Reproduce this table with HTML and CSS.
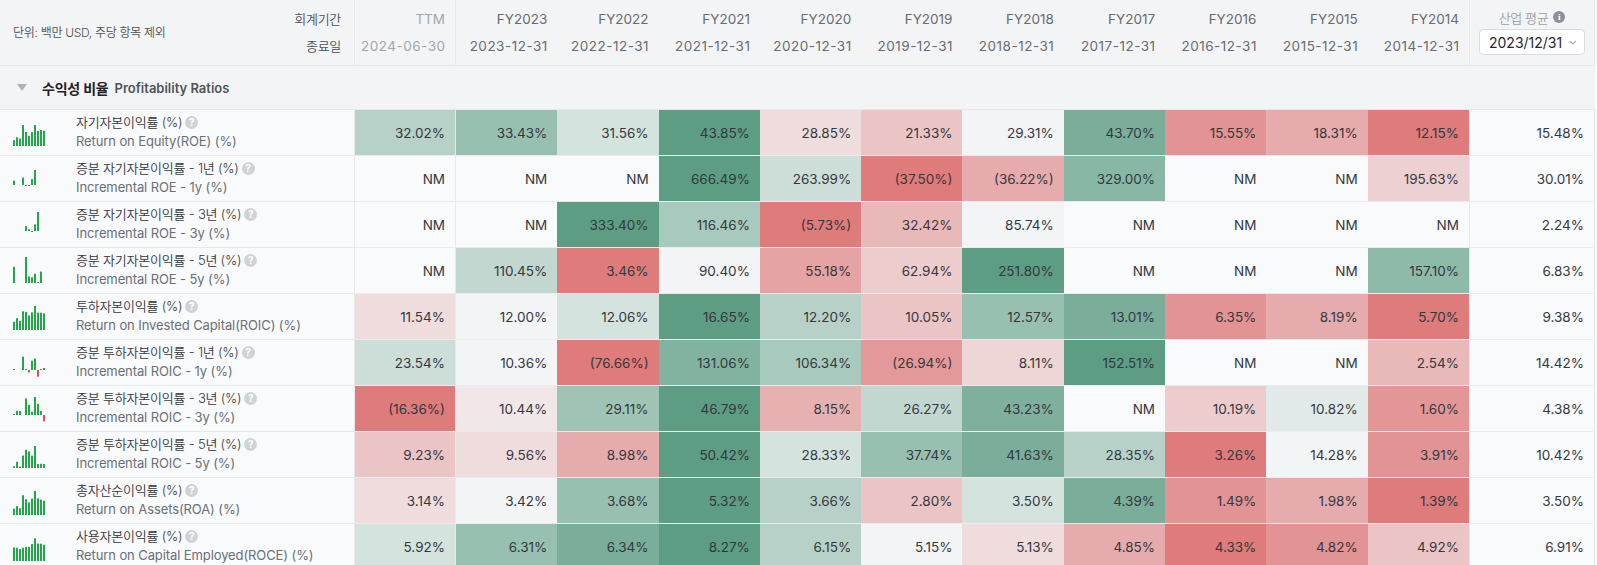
FILE: index.html
```html
<!DOCTYPE html>
<html lang="ko">
<head>
<meta charset="utf-8">
<title>수익성 비율</title>
<link rel="stylesheet" href="styles.css">
</head>
<body>
<div class="sheet">
  <!-- header -->
  <div class="hc hlabel">
    <span class="unit">단위: 백만 USD, 주당 항목 제외</span>
    <span class="hnames"><span>회계기간</span><span>종료일</span></span>
  </div>
  <div class="hc hcol ttm sep"><span>TTM</span><span>2024-06-30</span></div>
  <div class="hc hcol"><span>FY2023</span><span>2023-12-31</span></div>
  <div class="hc hcol"><span>FY2022</span><span>2022-12-31</span></div>
  <div class="hc hcol"><span>FY2021</span><span>2021-12-31</span></div>
  <div class="hc hcol"><span>FY2020</span><span>2020-12-31</span></div>
  <div class="hc hcol"><span>FY2019</span><span>2019-12-31</span></div>
  <div class="hc hcol"><span>FY2018</span><span>2018-12-31</span></div>
  <div class="hc hcol"><span>FY2017</span><span>2017-12-31</span></div>
  <div class="hc hcol"><span>FY2016</span><span>2016-12-31</span></div>
  <div class="hc hcol"><span>FY2015</span><span>2015-12-31</span></div>
  <div class="hc hcol"><span>FY2014</span><span>2014-12-31</span></div>
  <div class="hc havg">
    <span class="avg-title">산업 평균 <i class="info">i</i></span>
    <span class="select">2023/12/31 <svg class="chev" viewBox="0 0 8 5" width="8" height="5"><polyline points="1,1 4,4 7,1"/></svg></span>
  </div>

  <!-- section -->
  <div class="section">
    <svg class="tri" viewBox="0 0 10 7" width="10" height="7"><polygon points="0,0 10,0 5,7"/></svg>
    <span class="sec-ko">수익성 비율</span>
    <span class="sec-en">Profitability Ratios</span>
  </div>

  <!-- row 1 -->
  <div class="lc">
    <svg class="spark" viewBox="0 0 33 30"><rect x="0" y="22.2" width="2" height="5.8"/><rect x="3" y="19.2" width="2" height="8.8"/><rect x="6" y="20.6" width="2" height="7.4"/><rect x="9" y="7.1" width="2" height="20.9"/><rect x="12" y="14" width="2" height="14"/><rect x="15" y="17.8" width="2" height="10.2"/><rect x="18" y="14.2" width="2" height="13.8"/><rect x="21" y="7" width="2" height="21"/><rect x="24" y="12.9" width="2" height="15.1"/><rect x="27" y="12" width="2" height="16"/><rect x="30" y="12.7" width="2" height="15.3"/></svg>
    <div class="names"><div class="ko">자기자본이익률 (%)<i class="q">?</i></div><div class="en">Return on Equity(ROE) (%)</div></div>
  </div>
  <div class="c sep hg" style="--t:.6">32.02%</div>
  <div class="c hg" style="--t:.4">33.43%</div>
  <div class="c hg" style="--t:.8">31.56%</div>
  <div class="c hg" style="--t:0">43.85%</div>
  <div class="c hr" style="--t:.8">28.85%</div>
  <div class="c hr" style="--t:.6">21.33%</div>
  <div class="c hg" style="--t:1">29.31%</div>
  <div class="c hg" style="--t:.2">43.70%</div>
  <div class="c hr" style="--t:.2">15.55%</div>
  <div class="c hr" style="--t:.4">18.31%</div>
  <div class="c hr" style="--t:0">12.15%</div>
  <div class="c avg">15.48%</div>

  <!-- row 2 -->
  <div class="lc">
    <svg class="spark" viewBox="0 0 33 30"><rect x="0" y="16.6" width="2" height="4.4"/><rect x="9" y="13.6" width="2" height="7.4"/><rect class="neg" x="12" y="21" width="2" height="1"/><rect class="neg" x="15" y="21" width="2" height="1"/><rect x="18" y="15.1" width="2" height="5.9"/><rect x="21" y="6" width="2" height="15"/></svg>
    <div class="names"><div class="ko">증분 자기자본이익률 - 1년 (%)<i class="q">?</i></div><div class="en">Incremental ROE - 1y (%)</div></div>
  </div>
  <div class="c sep">NM</div>
  <div class="c">NM</div>
  <div class="c">NM</div>
  <div class="c hg" style="--t:0">666.49%</div>
  <div class="c hg" style="--t:.75">263.99%</div>
  <div class="c hr" style="--t:0">(37.50%)</div>
  <div class="c hr" style="--t:.4">(36.22%)</div>
  <div class="c hg" style="--t:.3">329.00%</div>
  <div class="c">NM</div>
  <div class="c">NM</div>
  <div class="c hr" style="--t:.7">195.63%</div>
  <div class="c avg">30.01%</div>

  <!-- row 3 -->
  <div class="lc">
    <svg class="spark" viewBox="0 0 33 30"><rect x="12" y="16.1" width="2" height="4.9"/><rect x="15" y="19.2" width="2" height="1.8"/><rect class="neg" x="18" y="21" width="2" height="1"/><rect x="21" y="14.4" width="2" height="6.6"/><rect x="24" y="2" width="2" height="19"/></svg>
    <div class="names"><div class="ko">증분 자기자본이익률 - 3년 (%)<i class="q">?</i></div><div class="en">Incremental ROE - 3y (%)</div></div>
  </div>
  <div class="c sep">NM</div>
  <div class="c">NM</div>
  <div class="c hg" style="--t:0">333.40%</div>
  <div class="c hg" style="--t:.5">116.46%</div>
  <div class="c hr" style="--t:0">(5.73%)</div>
  <div class="c hr" style="--t:.5">32.42%</div>
  <div class="c hg" style="--t:1">85.74%</div>
  <div class="c">NM</div>
  <div class="c">NM</div>
  <div class="c">NM</div>
  <div class="c">NM</div>
  <div class="c avg">2.24%</div>

  <!-- row 4 -->
  <div class="lc">
    <svg class="spark" viewBox="0 0 33 30"><rect x="0" y="10.8" width="2" height="16.2"/><rect x="12" y="1" width="2" height="26"/><rect x="15" y="20.5" width="2" height="6.5"/><rect x="18" y="21.3" width="2" height="5.7"/><rect x="21" y="17.7" width="2" height="9.3"/><rect x="24" y="26" width="2" height="1"/><rect x="27" y="15.6" width="2" height="11.4"/></svg>
    <div class="names"><div class="ko">증분 자기자본이익률 - 5년 (%)<i class="q">?</i></div><div class="en">Incremental ROE - 5y (%)</div></div>
  </div>
  <div class="c sep">NM</div>
  <div class="c hg" style="--t:.667">110.45%</div>
  <div class="c hr" style="--t:0">3.46%</div>
  <div class="c hg" style="--t:1">90.40%</div>
  <div class="c hr" style="--t:.333">55.18%</div>
  <div class="c hr" style="--t:.667">62.94%</div>
  <div class="c hg" style="--t:0">251.80%</div>
  <div class="c">NM</div>
  <div class="c">NM</div>
  <div class="c">NM</div>
  <div class="c hg" style="--t:.333">157.10%</div>
  <div class="c avg">6.83%</div>

  <!-- row 5 -->
  <div class="lc">
    <svg class="spark" viewBox="0 0 33 30"><rect x="0" y="19.8" width="2" height="8.2"/><rect x="3" y="16.2" width="2" height="11.8"/><rect x="6" y="18.8" width="2" height="9.2"/><rect x="9" y="9.3" width="2" height="18.7"/><rect x="12" y="9.9" width="2" height="18.1"/><rect x="15" y="13.5" width="2" height="14.5"/><rect x="18" y="10.4" width="2" height="17.6"/><rect x="21" y="4" width="2" height="24"/><rect x="24" y="10.6" width="2" height="17.4"/><rect x="27" y="10.7" width="2" height="17.3"/><rect x="30" y="11.4" width="2" height="16.6"/></svg>
    <div class="names"><div class="ko">투하자본이익률 (%)<i class="q">?</i></div><div class="en">Return on Invested Capital(ROIC) (%)</div></div>
  </div>
  <div class="c sep hr" style="--t:.8">11.54%</div>
  <div class="c hg" style="--t:1">12.00%</div>
  <div class="c hg" style="--t:.8">12.06%</div>
  <div class="c hg" style="--t:0">16.65%</div>
  <div class="c hg" style="--t:.6">12.20%</div>
  <div class="c hr" style="--t:.6">10.05%</div>
  <div class="c hg" style="--t:.4">12.57%</div>
  <div class="c hg" style="--t:.2">13.01%</div>
  <div class="c hr" style="--t:.2">6.35%</div>
  <div class="c hr" style="--t:.4">8.19%</div>
  <div class="c hr" style="--t:0">5.70%</div>
  <div class="c avg">9.38%</div>

  <!-- row 6 -->
  <div class="lc">
    <svg class="spark" viewBox="0 0 33 30"><rect x="0" y="21" width="2" height="1"/><rect x="9" y="8.7" width="2" height="13.3"/><rect x="12" y="21" width="2" height="1"/><rect class="neg" x="15" y="22" width="2" height="2.4"/><rect x="18" y="12.7" width="2" height="9.3"/><rect x="21" y="10.6" width="2" height="11.4"/><rect class="neg" x="24" y="22" width="2" height="6.7"/><rect x="27" y="21" width="2" height="1"/><rect x="30" y="20" width="2" height="2"/></svg>
    <div class="names"><div class="ko">증분 투하자본이익률 - 1년 (%)<i class="q">?</i></div><div class="en">Incremental ROIC - 1y (%)</div></div>
  </div>
  <div class="c sep hg" style="--t:.75">23.54%</div>
  <div class="c hg" style="--t:1">10.36%</div>
  <div class="c hr" style="--t:0">(76.66%)</div>
  <div class="c hg" style="--t:.25">131.06%</div>
  <div class="c hg" style="--t:.5">106.34%</div>
  <div class="c hr" style="--t:.25">(26.94%)</div>
  <div class="c hr" style="--t:.75">8.11%</div>
  <div class="c hg" style="--t:0">152.51%</div>
  <div class="c">NM</div>
  <div class="c">NM</div>
  <div class="c hr" style="--t:.5">2.54%</div>
  <div class="c avg">14.42%</div>

  <!-- row 7 -->
  <div class="lc">
    <svg class="spark" viewBox="0 0 33 30"><rect x="0" y="20" width="2" height="1"/><rect x="3" y="16.8" width="2" height="4.2"/><rect x="6" y="17.1" width="2" height="3.9"/><rect x="12" y="4.4" width="2" height="16.6"/><rect x="15" y="10.9" width="2" height="10.1"/><rect x="18" y="17.9" width="2" height="3.1"/><rect x="21" y="3" width="2" height="18"/><rect x="24" y="9.8" width="2" height="11.2"/><rect x="27" y="17" width="2" height="4"/><rect class="neg" x="30" y="21" width="2" height="6.3"/></svg>
    <div class="names"><div class="ko">증분 투하자본이익률 - 3년 (%)<i class="q">?</i></div><div class="en">Incremental ROIC - 3y (%)</div></div>
  </div>
  <div class="c sep hr" style="--t:0">(16.36%)</div>
  <div class="c hr" style="--t:.889">10.44%</div>
  <div class="c hg" style="--t:.444">29.11%</div>
  <div class="c hg" style="--t:0">46.79%</div>
  <div class="c hr" style="--t:.444">8.15%</div>
  <div class="c hg" style="--t:.667">26.27%</div>
  <div class="c hg" style="--t:.222">43.23%</div>
  <div class="c">NM</div>
  <div class="c hr" style="--t:.667">10.19%</div>
  <div class="c hg" style="--t:.889">10.82%</div>
  <div class="c hr" style="--t:.222">1.60%</div>
  <div class="c avg">4.38%</div>

  <!-- row 8 -->
  <div class="lc">
    <svg class="spark" viewBox="0 0 33 30"><rect x="0" y="26.3" width="2" height="1.7"/><rect x="3" y="21.8" width="2" height="6.2"/><rect x="6" y="26.6" width="2" height="1.4"/><rect x="9" y="15.6" width="2" height="12.4"/><rect x="12" y="9.8" width="2" height="18.2"/><rect x="15" y="11.5" width="2" height="16.5"/><rect x="18" y="15.6" width="2" height="12.4"/><rect x="21" y="6" width="2" height="22"/><rect x="24" y="24.1" width="2" height="3.9"/><rect x="27" y="23.8" width="2" height="4.2"/><rect x="30" y="24" width="2" height="4"/></svg>
    <div class="names"><div class="ko">증분 투하자본이익률 - 5년 (%)<i class="q">?</i></div><div class="en">Incremental ROIC - 5y (%)</div></div>
  </div>
  <div class="c sep hr" style="--t:.6">9.23%</div>
  <div class="c hr" style="--t:.8">9.56%</div>
  <div class="c hr" style="--t:.4">8.98%</div>
  <div class="c hg" style="--t:0">50.42%</div>
  <div class="c hg" style="--t:.8">28.33%</div>
  <div class="c hg" style="--t:.4">37.74%</div>
  <div class="c hg" style="--t:.2">41.63%</div>
  <div class="c hg" style="--t:.6">28.35%</div>
  <div class="c hr" style="--t:0">3.26%</div>
  <div class="c hg" style="--t:1">14.28%</div>
  <div class="c hr" style="--t:.2">3.91%</div>
  <div class="c avg">10.42%</div>

  <!-- row 9 -->
  <div class="lc">
    <svg class="spark" viewBox="0 0 33 30"><rect x="0" y="22.7" width="2" height="6.3"/><rect x="3" y="20.1" width="2" height="8.9"/><rect x="6" y="22.3" width="2" height="6.7"/><rect x="9" y="9.2" width="2" height="19.8"/><rect x="12" y="13.2" width="2" height="15.8"/><rect x="15" y="16.4" width="2" height="12.6"/><rect x="18" y="12.5" width="2" height="16.5"/><rect x="21" y="5" width="2" height="24"/><rect x="24" y="12.4" width="2" height="16.6"/><rect x="27" y="13.6" width="2" height="15.4"/><rect x="30" y="14.8" width="2" height="14.2"/></svg>
    <div class="names"><div class="ko">총자산순이익률 (%)<i class="q">?</i></div><div class="en">Return on Assets(ROA) (%)</div></div>
  </div>
  <div class="c sep hr" style="--t:.8">3.14%</div>
  <div class="c hg" style="--t:1">3.42%</div>
  <div class="c hg" style="--t:.4">3.68%</div>
  <div class="c hg" style="--t:0">5.32%</div>
  <div class="c hg" style="--t:.6">3.66%</div>
  <div class="c hr" style="--t:.6">2.80%</div>
  <div class="c hg" style="--t:.8">3.50%</div>
  <div class="c hg" style="--t:.2">4.39%</div>
  <div class="c hr" style="--t:.2">1.49%</div>
  <div class="c hr" style="--t:.4">1.98%</div>
  <div class="c hr" style="--t:0">1.39%</div>
  <div class="c avg">3.50%</div>

  <!-- row 10 -->
  <div class="lc">
    <svg class="spark" viewBox="0 0 33 30"><rect x="0" y="15.5" width="2" height="13.5"/><rect x="3" y="15.8" width="2" height="13.2"/><rect x="6" y="17.1" width="2" height="11.9"/><rect x="9" y="15.7" width="2" height="13.3"/><rect x="12" y="14.9" width="2" height="14.1"/><rect x="15" y="14.9" width="2" height="14.1"/><rect x="18" y="12.1" width="2" height="16.9"/><rect x="21" y="6.3" width="2" height="22.7"/><rect x="24" y="11.6" width="2" height="17.4"/><rect x="27" y="11.7" width="2" height="17.3"/><rect x="30" y="12.7" width="2" height="16.3"/></svg>
    <div class="names"><div class="ko">사용자본이익률 (%)<i class="q">?</i></div><div class="en">Return on Capital Employed(ROCE) (%)</div></div>
  </div>
  <div class="c sep hg" style="--t:.8">5.92%</div>
  <div class="c hg" style="--t:.4">6.31%</div>
  <div class="c hg" style="--t:.2">6.34%</div>
  <div class="c hg" style="--t:0">8.27%</div>
  <div class="c hg" style="--t:.6">6.15%</div>
  <div class="c hg" style="--t:1">5.15%</div>
  <div class="c hr" style="--t:.8">5.13%</div>
  <div class="c hr" style="--t:.4">4.85%</div>
  <div class="c hr" style="--t:0">4.33%</div>
  <div class="c hr" style="--t:.2">4.82%</div>
  <div class="c hr" style="--t:.6">4.92%</div>
  <div class="c avg">6.91%</div>
</div>
</body>
</html>
```

FILE: styles.css
```css
* { box-sizing: border-box; }

html, body {
  margin: 0;
  background: #f9fafb;
}

body {
  font-family: Inter, "Noto Sans CJK KR", "Noto Sans", sans-serif;
  font-size: 13px;
  color: #33373d;
}

.sheet {
  display: grid;
  grid-template-columns: 355px 101px repeat(10, 101.3px) 126px;
  grid-template-rows: 66px 44px;
  grid-auto-rows: 46px;
  width: 1595px;
}

/* ---------- header ---------- */
.hc {
  background: #f3f4f6;
  border-bottom: 1px solid #e5e7eb;
}

.hlabel {
  display: flex;
  align-items: center;
  justify-content: space-between;
  padding: 0 13px 0 13px;
  border-right: 1px solid #e5e7eb;
}

.unit {
  font-size: 12px;
  font-weight: 350;
  color: #4b5058;
  letter-spacing: -0.3px;
  margin-top: -3px;
}

.hnames {
  display: flex;
  flex-direction: column;
  align-items: flex-end;
  line-height: 27px;
  color: #4b5058;
  font-size: 13px;
  font-weight: 350;
  letter-spacing: -0.3px;
}

.hcol {
  display: flex;
  flex-direction: column;
  align-items: flex-end;
  justify-content: center;
  padding-right: 10px;
  line-height: 27px;
  color: #676b73;
  font-size: 13.5px;
}

.hcol span + span {
  letter-spacing: 0.5px;
  margin-right: -0.5px;
}

.hcol.ttm { color: #a2a6ad; }

.sep { border-right: 1px solid #e6e8eb; }

.havg {
  display: flex;
  flex-direction: column;
  align-items: center;
  border-left: 1px solid #e5e7eb;
  border-right: 1px solid #e5e7eb;
}

.avg-title {
  display: flex;
  align-items: center;
  gap: 5px;
  margin-top: 8px;
  height: 18px;
  color: #9ca0a8;
  font-size: 13px;
  font-weight: 350;
  letter-spacing: -0.4px;
}

.info {
  display: inline-flex;
  align-items: center;
  justify-content: center;
  width: 12px;
  height: 12px;
  border-radius: 50%;
  background: #8c9099;
  color: #fff;
  font-style: normal;
  font-weight: 700;
  font-size: 9px;
  letter-spacing: 0;
  font-family: "Liberation Serif", serif;
}

.select {
  display: flex;
  align-items: center;
  justify-content: space-between;
  margin-top: 3px;
  width: 106px;
  height: 26px;
  padding: 0 7px 0 9px;
  background: #fff;
  border: 1px solid #d9dce1;
  border-radius: 4px;
  color: #24272c;
  font-size: 14px;
}

.chev {
  fill: none;
  stroke: #a5a9b0;
  stroke-width: 1.1;
}

/* ---------- section ---------- */
.section {
  grid-column: 1 / -1;
  display: flex;
  align-items: center;
  background: #f3f4f6;
  border-bottom: 1px solid #e5e7eb;
  padding-left: 17px;
}

.tri {
  fill: #aeb2b8;
  margin-right: 15px;
}

.sec-ko {
  font-weight: 700;
  font-size: 14px;
  color: #1f2226;
  letter-spacing: -0.2px;
  margin-right: 6px;
}

.sec-en {
  font-weight: 600;
  font-size: 13px;
  color: #4f545b;
}

/* ---------- rows ---------- */
.lc {
  display: flex;
  align-items: flex-start;
  border-bottom: 1px solid #e6e8eb;
  border-right: 1px solid #e6e8eb;
}

.spark {
  flex: none;
  width: 33px;
  height: 30px;
  margin: 8px 30px 0 13px;
}

.spark rect { fill: #25a54b; }
.spark rect.neg { fill: #e5484d; }

.names {
  align-self: center;
  line-height: 19px;
  margin-top: -1px;
}

.ko {
  display: flex;
  align-items: center;
  color: #34373c;
  font-weight: 350;
  letter-spacing: -0.2px;
}

.q {
  display: inline-flex;
  align-items: center;
  justify-content: center;
  width: 13px;
  height: 13px;
  margin-left: 3px;
  border-radius: 50%;
  background: #cfd2d6;
  color: #fff;
  font-style: normal;
  font-weight: 700;
  font-size: 10px;
  letter-spacing: 0;
}

.en {
  color: #6a6f77;
  letter-spacing: -0.1px;
}

.c {
  display: flex;
  align-items: center;
  justify-content: flex-end;
  padding-right: 10px;
  border-bottom: 1px solid #e9ebee;
  color: #34383e;
  font-size: 13.5px;
}

.c.avg {
  border-left: 1px solid #e6e8eb;
  border-right: 1px solid #e6e8eb;
}

.hg {
  background: rgb(calc(92 + 151 * var(--t)), calc(157 + 87 * var(--t)), calc(131 + 115 * var(--t)));
}

.hr {
  background: rgb(calc(222 + 21 * var(--t)), calc(123 + 121 * var(--t)), calc(123 + 123 * var(--t)));
}
```
